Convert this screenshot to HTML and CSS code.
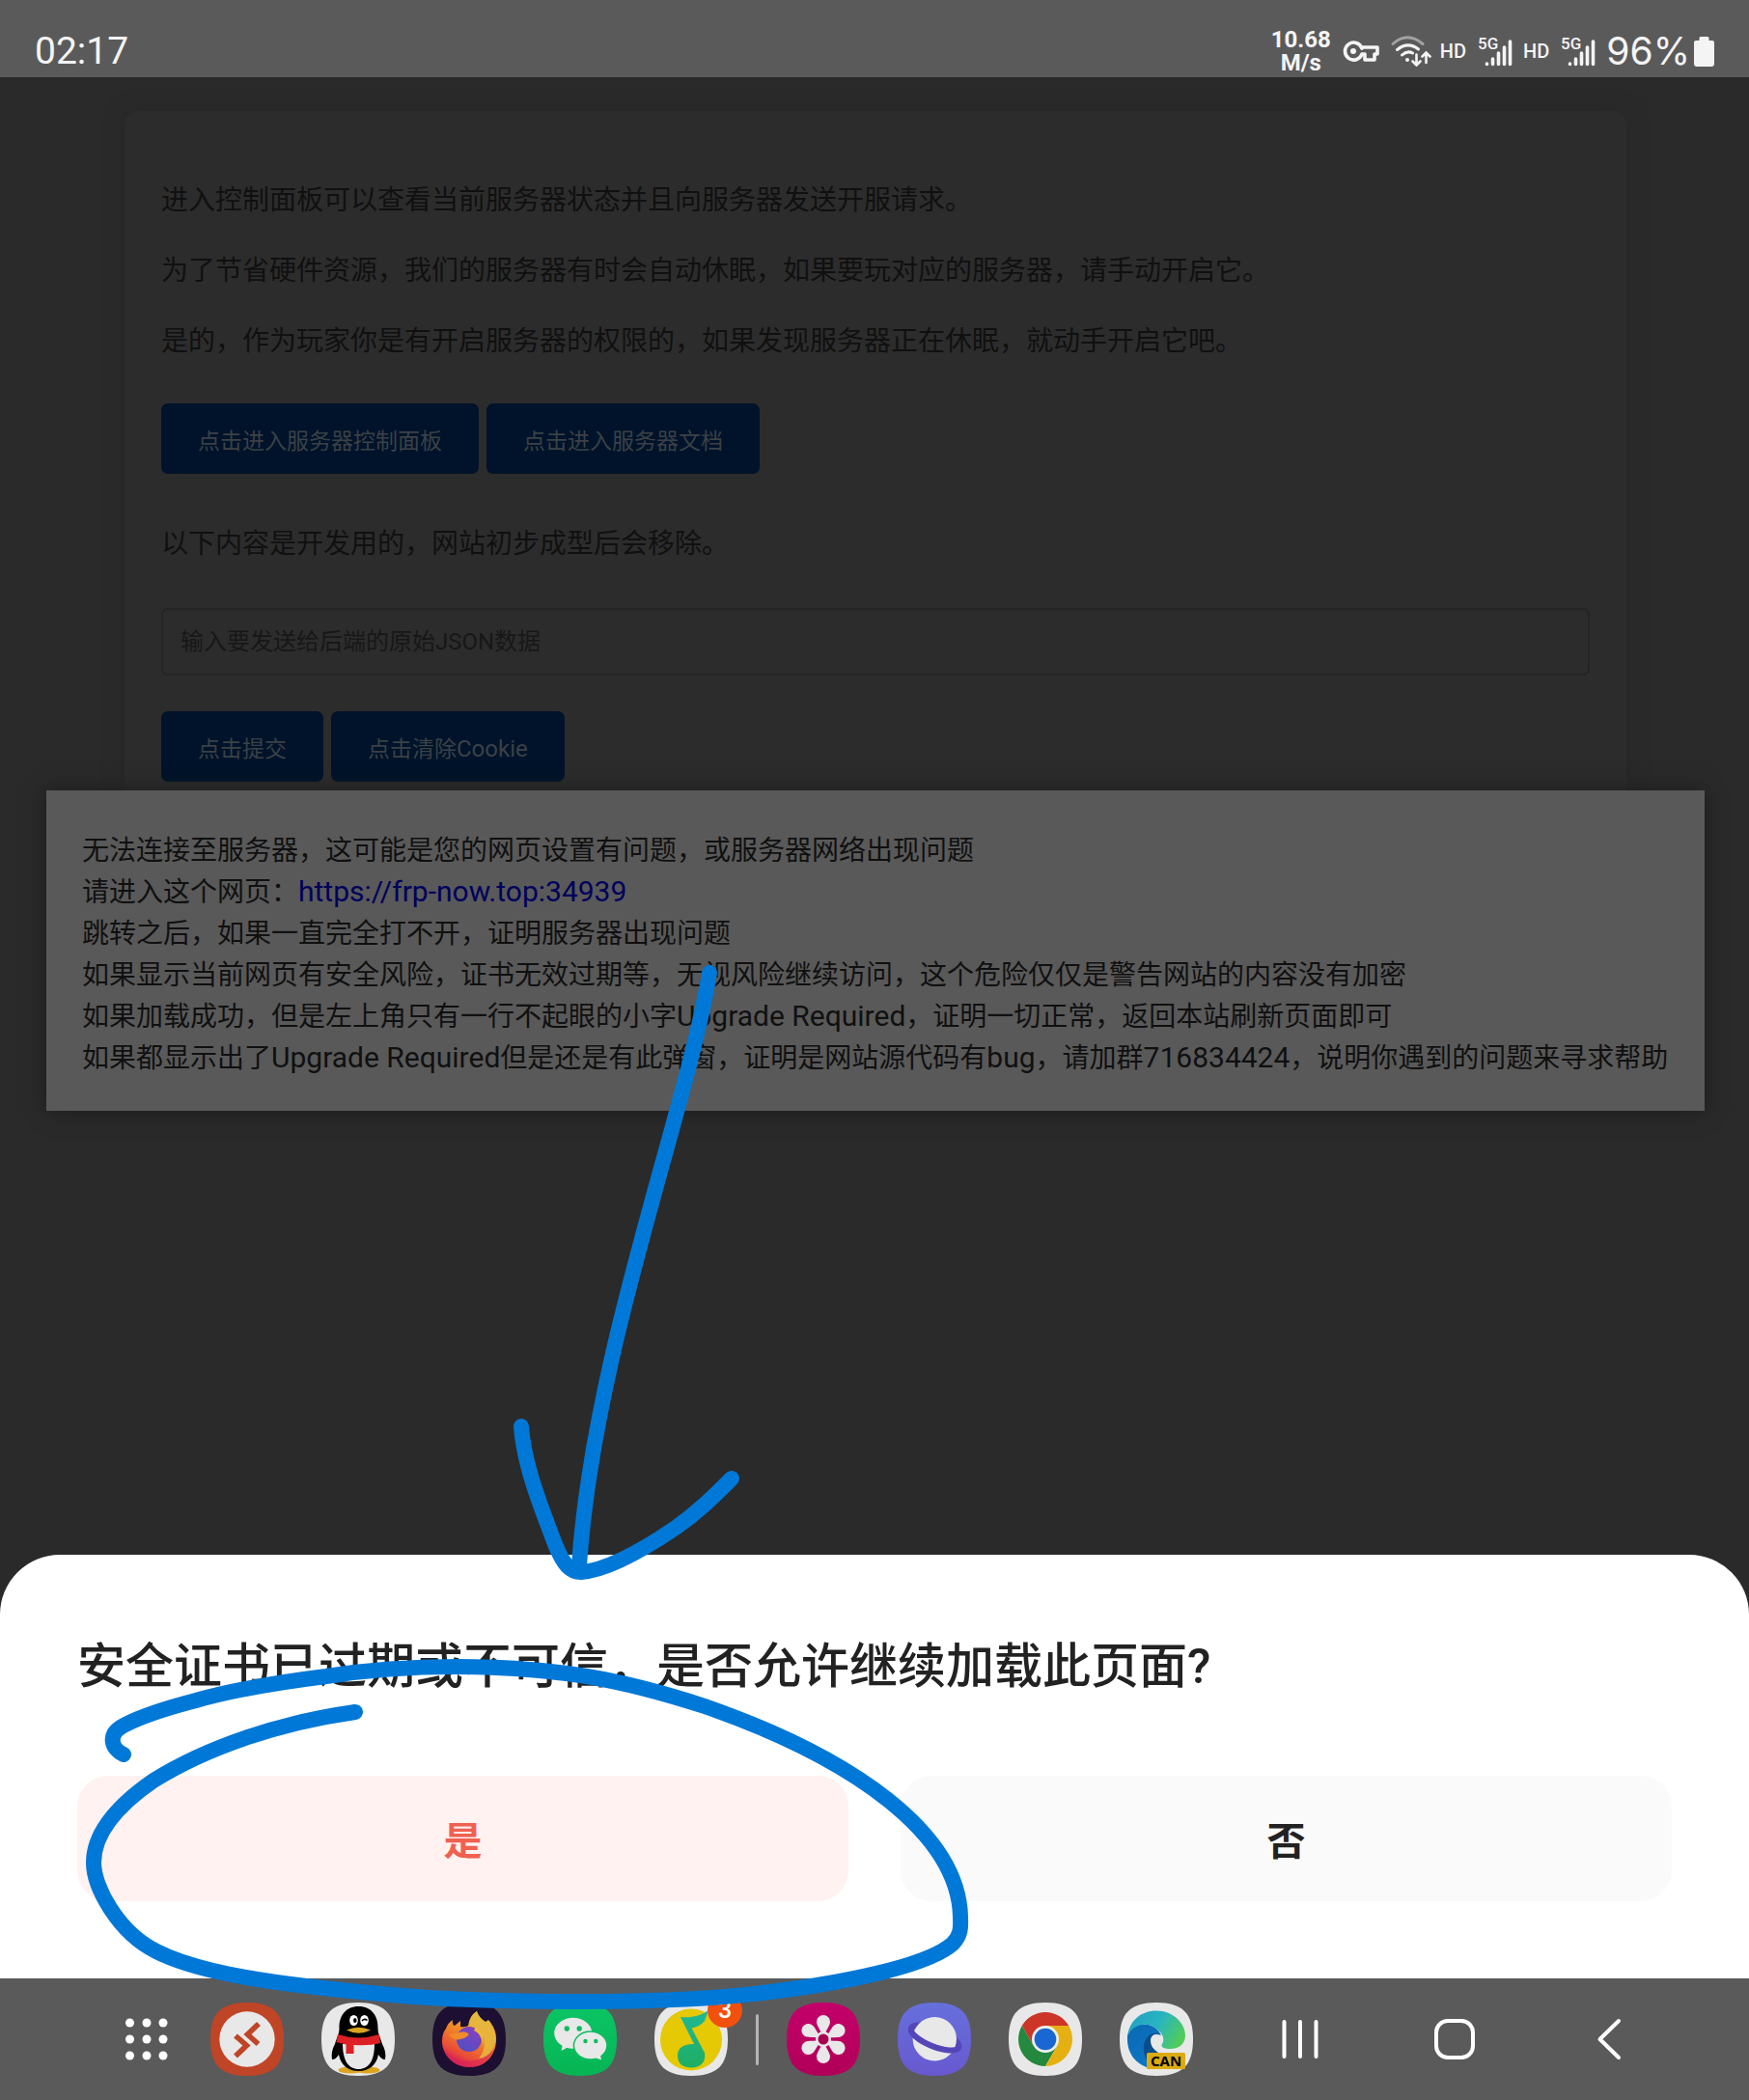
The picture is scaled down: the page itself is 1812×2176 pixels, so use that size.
FILE: index.html
```html
<!DOCTYPE html>
<html lang="zh-CN">
<head>
<meta charset="utf-8">
<meta name="viewport" content="width=device-width, initial-scale=1">
<title>服务器控制面板</title>
<link rel="stylesheet" href="styles.css">
</head>
<body>
<header class="status">
  <time class="clock">02:17</time>
  <div class="indicators">
    <div class="speed">10.68<br>M/s</div>
    <svg class="key" viewBox="0 0 38 22" width="38" height="22" aria-hidden="true"><path d="M20 8.2A9 9 0 1 0 20 14H23V20H33V14H36V7H20Z" fill="none" stroke="#f4f4f4" stroke-width="3.6" stroke-linejoin="round"/><circle cx="11" cy="11" r="3" fill="#f4f4f4"/></svg>
    <svg class="wifi" viewBox="0 0 42 32" width="42" height="32" fill="none" stroke-linecap="round" aria-hidden="true"><path d="M2 8.500Q17 -5 33 8.500" stroke="#a2a2a2" stroke-width="3"/><path d="M6.500 14.500Q17.500 5.500 28.500 14M11.500 20Q17 15 22.500 18" stroke="#f4f4f4" stroke-width="3"/><circle cx="17" cy="25" r="2" fill="#f4f4f4"/><path d="M26.500 19.500V30M22.500 26.500L26.500 30.500L30.500 26.500M36.500 28V18M32.500 21.500L36.500 17.500L40.500 21.500" stroke="#f4f4f4" stroke-width="2.600"/></svg>
    <span class="hd">HD</span>
    <svg class="signal" viewBox="0 0 38 32" width="38" height="32" aria-hidden="true"><text x="1" y="14" class="gen">5G</text><path d="M10.500 29.500V29M16.500 29.500V24M22.500 29.500V18M28.500 29.500V12M34.500 29.500V6" stroke="#f4f4f4" stroke-width="3.600" stroke-linecap="round"/></svg>
    <span class="hd">HD</span>
    <svg class="signal" viewBox="0 0 38 32" width="38" height="32" aria-hidden="true"><text x="1" y="14" class="gen">5G</text><path d="M10.500 29.500V29M16.500 29.500V24M22.500 29.500V18M28.500 29.500V12M34.500 29.500V6" stroke="#f4f4f4" stroke-width="3.600" stroke-linecap="round"/></svg>
    <span class="percent">96%</span>
    <svg class="battery" viewBox="0 0 21 31" width="21" height="31" aria-hidden="true"><path d="M7 0H14Q15.500 0 15.500 1.500V4H19Q21 4 21 6V28Q21 31 18 31H3Q0 31 0 28V6Q0 4 2 4H5.500V1.500Q5.500 0 7 0Z" fill="#f4f4f4"/></svg>
  </div>
</header>

<main class="page">
  <section class="card">
    <p>进入控制面板可以查看当前服务器状态并且向服务器发送开服请求。</p>
    <p>为了节省硬件资源，我们的服务器有时会自动休眠，如果要玩对应的服务器，请手动开启它。</p>
    <p>是的，作为玩家你是有开启服务器的权限的，如果发现服务器正在休眠，就动手开启它吧。</p>
    <div class="actions">
      <button type="button">点击进入服务器控制面板</button>
      <button type="button">点击进入服务器文档</button>
    </div>
    <p>以下内容是开发用的，网站初步成型后会移除。</p>
    <input class="json" type="text" placeholder="输入要发送给后端的原始JSON数据" aria-label="输入要发送给后端的原始JSON数据">
    <div class="actions">
      <button type="button">点击提交</button>
      <button type="button">点击清除<span class="latin-small">Cookie</span></button>
    </div>
  </section>
  <section class="notice">
    无法连接至服务器，这可能是您的网页设置有问题，或服务器网络出现问题<br>
    请进入这个网页：<a class="latin" href="https://frp-now.top:34939">https://frp-now.top:34939</a><br>
    跳转之后，如果一直完全打不开，证明服务器出现问题<br>
    如果显示当前网页有安全风险，证书无效过期等，无视风险继续访问，这个危险仅仅是警告网站的内容没有加密<br>
    如果加载成功，但是左上角只有一行不起眼的小字<span class="latin">Upgrade Required</span>，证明一切正常，返回本站刷新页面即可<br>
    如果都显示出了<span class="latin">Upgrade Required</span>但是还是有此弹窗，证明是网站源代码有<span class="latin">bug</span>，请加群<span class="latin">716834424</span>，说明你遇到的问题来寻求帮助
  </section>
</main>

<section class="sheet" role="dialog" aria-labelledby="sheet-title">
  <h1 id="sheet-title">安全证书已过期或不可信，是否允许继续加载此页面?</h1>
  <div class="choices">
    <button type="button" class="yes">是</button>
    <button type="button" class="no">否</button>
  </div>
</section>

<nav class="taskbar">
  <svg width="0" height="0" class="defs" aria-hidden="true"><defs>
    <path id="tile" d="M38 0C65 0 76 11 76 38S65 76 38 76 0 65 0 38 11 0 38 0Z"/>
    <linearGradient id="fox" x1="0.8" y1="0" x2="0.3" y2="1"><stop offset="0" stop-color="#e8c545"/><stop offset="0.45" stop-color="#f08a25"/><stop offset="0.8" stop-color="#ea4a38"/><stop offset="1" stop-color="#c81065"/></linearGradient>
    <linearGradient id="globe" x1="0.8" y1="0" x2="0.2" y2="1"><stop offset="0" stop-color="#8a3fc0"/><stop offset="1" stop-color="#4d50c4"/></linearGradient>
    <linearGradient id="wechat" x1="0" y1="0" x2="0" y2="1"><stop offset="0" stop-color="#0cc566"/><stop offset="1" stop-color="#06b554"/></linearGradient>
    <linearGradient id="note" x1="0" y1="0" x2="0" y2="1"><stop offset="0" stop-color="#1fb898"/><stop offset="1" stop-color="#1fae62"/></linearGradient>
    <linearGradient id="pink" x1="0" y1="0" x2="0" y2="1"><stop offset="0" stop-color="#c4006a"/><stop offset="1" stop-color="#b00058"/></linearGradient>
    <linearGradient id="violet" x1="0" y1="0" x2="0" y2="1"><stop offset="0" stop-color="#6670dc"/><stop offset="1" stop-color="#6858cf"/></linearGradient>
    <linearGradient id="wave" x1="0" y1="0.2" x2="1" y2="0.6"><stop offset="0" stop-color="#239fc4"/><stop offset="0.5" stop-color="#28b5c0"/><stop offset="1" stop-color="#52cc58"/></linearGradient>
    <linearGradient id="deep" x1="0" y1="0" x2="0.6" y2="1"><stop offset="0" stop-color="#0b67b0"/><stop offset="1" stop-color="#0c78c8"/></linearGradient>
  </defs></svg>
  <div class="dock">
    <button type="button" class="grid" aria-label="所有应用"><svg viewBox="0 0 76 76" fill="#fff"><circle cx="20.500" cy="21" r="4.500"/><circle cx="38" cy="21" r="4.500"/><circle cx="55" cy="21" r="4.500"/><circle cx="20.500" cy="38" r="4.500"/><circle cx="38" cy="38" r="4.500"/><circle cx="55" cy="38" r="4.500"/><circle cx="20.500" cy="55" r="4.500"/><circle cx="38" cy="55" r="4.500"/><circle cx="55" cy="55" r="4.500"/></svg></button>
    <button type="button" aria-label="远程桌面"><svg viewBox="0 0 76 76"><use href="#tile" fill="#c04426"/><circle cx="38" cy="38" r="28.700" fill="#e8e8e8"/><path d="M26 34.500L37.500 44.500L26 55.500M50 22L38.500 33L49.500 43" fill="none" stroke="#c04426" stroke-width="5.600" stroke-linejoin="miter"/></svg></button>
    <button type="button" aria-label="QQ"><svg viewBox="0 0 76 76"><use href="#tile" fill="#e8e8e8"/><ellipse cx="30" cy="70" rx="12.500" ry="3.600" fill="#dba51e"/><ellipse cx="48" cy="70" rx="12.500" ry="3.600" fill="#dba51e"/><path d="M38.500 4C25 4 18 14 18.500 27C18.500 32 16 36 14 43C11 48 10 54 11 59C14 59 16 57 18 54C20 65 28 71 38.500 71S57 65 59 54C61 57 63 59 66 59C67 54 66 48 63 43C61 36 58.500 32 58.500 27C59 14 52 4 38.500 4Z"/><path d="M22 43C22 60 28 69 38.500 69S55 60 55 43Z" fill="#e8e8e8"/><path d="M17 33Q38 40 60 33L61 42Q50 45 33.500 44V53H25.500V43.500L15.500 41Z" fill="#dc2026"/><ellipse cx="33.500" cy="18.500" rx="4.300" ry="5.500" fill="#fff"/><ellipse cx="44.500" cy="18.500" rx="4.300" ry="5.500" fill="#fff"/><ellipse cx="34.800" cy="18.500" rx="1.800" ry="2.500"/><path d="M42 19Q44.500 16 47.500 18.500" fill="none" stroke="#000" stroke-width="1.500"/><path d="M26 28.500Q38.500 23 51 28.500Q38.500 35 26 28.500Z" fill="#dba51e"/></svg></button>
    <button type="button" aria-label="Firefox"><svg viewBox="0 0 76 76"><use href="#tile" fill="#1c0f31"/><path d="M14 27Q16 21 21 18Q20 23 23 24L29 19V25Q33 26 37 24Q38 14 46 9Q48 16 55 20L58 18Q67 28 66 40C65 57 53 67 38 67S10 55 10 40Q10 32 14 27Z" fill="url(#fox)"/><path d="M46 9Q48 16 55 20Q67 29 65 42Q60 57 48 58Q56 48 53 36Q49 27 38 26Q38 14 46 9Z" fill="#e5b940" opacity="0.85"/><circle cx="38" cy="38" r="13" fill="url(#globe)"/><path d="M17 33L28 31Q35 29 38 33Q35 37 29 38Q22 40 17 33Z" fill="#f18a28"/><path d="M45 25Q55 33 52 44Q51 32 43 29Z" fill="#f1b834"/><path d="M11 46Q20 63 42 60Q57 58 64 48Q57 67 38 67Q17 66 11 46Z" fill="#da2558" opacity="0.6"/></svg></button>
    <button type="button" aria-label="微信"><svg viewBox="0 0 76 76"><use href="#tile" fill="url(#wechat)"/><path d="M20 43L18.500 50L26 46Z" fill="#e8e8e8"/><ellipse cx="30.700" cy="31.700" rx="19.500" ry="16" fill="#e8e8e8"/><ellipse cx="48.700" cy="44.500" rx="18" ry="15.300" fill="#09bd5d"/><path d="M53 57L60 59.500L58.500 52Z" fill="#e8e8e8"/><ellipse cx="48.700" cy="44.500" rx="16.500" ry="13.800" fill="#e8e8e8"/><g fill="#09bd5d"><circle cx="24.300" cy="27" r="2.700"/><circle cx="37.200" cy="27" r="2.700"/><circle cx="43.500" cy="40" r="2.200"/><circle cx="54.300" cy="40" r="2.200"/></g></svg></button>
    <button type="button" aria-label="QQ音乐"><svg viewBox="0 0 76 76"><use href="#tile" fill="#e8e8e8"/><circle cx="38" cy="38.500" r="32" fill="#e4c904"/><path d="M27 15C38 16 48 14 56 8L52 19Q47 25 38.500 26.500L52 52Q54 67 38 67.500Q24 67 24 55Q24 43 41 43Z" fill="url(#note)"/></svg><span class="badge">3</span></button>
    <span class="divider"></span>
    <button type="button" aria-label="相册"><svg viewBox="0 0 76 76"><use href="#tile" fill="url(#pink)"/><g fill="#e8e8e8"><path id="petal" d="M38 36C35 28 31 24 31 20A7 7 0 0 1 45 20C45 24 41 28 38 36Z"/><use href="#petal" transform="rotate(60 38 38)"/><use href="#petal" transform="rotate(120 38 38)"/><use href="#petal" transform="rotate(180 38 38)"/><use href="#petal" transform="rotate(240 38 38)"/><use href="#petal" transform="rotate(300 38 38)"/><circle cx="38" cy="38" r="8"/></g><circle cx="38" cy="38" r="5.500" fill="#a8004f"/></svg></button>
    <button type="button" aria-label="浏览器"><svg viewBox="0 0 76 76"><use href="#tile" fill="url(#violet)"/><g fill="none" stroke="#5546b8" stroke-width="6"><ellipse cx="0" cy="0" rx="26.500" ry="9" transform="translate(38.500 36.500) rotate(22)"/><circle cx="38.300" cy="37.700" r="22.700" fill="#e8e8e8" stroke="none"/><path d="M-26.500 0A26.500 9 0 0 0 26.500 0" transform="translate(38.500 36.500) rotate(22)"/></g></svg></button>
    <button type="button" aria-label="Chrome"><svg viewBox="0 0 76 76"><use href="#tile" fill="#e8e8e8"/><path d="M62.200 24A28 28 0 0 0 13.800 24L25.900 45L38 24Z" fill="#cd3529"/><path d="M13.800 24A28 28 0 0 0 38 66L50.100 45L38 38L25.900 45Z" fill="#24883f"/><path d="M38 66A28 28 0 0 0 62.200 24H38V38L50.100 45Z" fill="#e5b011"/><circle cx="38" cy="38" r="14" fill="#f0f0f0"/><circle cx="38" cy="38" r="11.300" fill="#1967d2"/></svg></button>
    <button type="button" aria-label="Edge Canary"><svg viewBox="0 0 76 76"><use href="#tile" fill="#e8e8e8"/><path d="M8 38C8 22 20 22 30 23Q40 26 43 34C32 30 26 38 27 47L31 68C17 64 8 53 8 38Z" fill="url(#deep)"/><path d="M43 33C31 28 24 38 25 50Q26 60 33 64L40 52Q31 46 32 38Q34 31 43 33Z" fill="#0b4c8c"/><path d="M8.500 34C10 19 22 8.500 38 8.500C56 8.500 68 22 68 34C68 43 61 48 53 48C46 48 42 46 44 43C47 39 45 32 39 28C30 19 14 22 8.500 34Z" fill="url(#wave)"/><rect x="28" y="52" width="40" height="17" rx="1.500" fill="#dcab14"/><text x="48" y="65.500" text-anchor="middle" class="can">CAN</text></svg></button>
  </div>
  <div class="keys">
    <button type="button" aria-label="最近任务"><svg viewBox="0 0 76 76"><path d="M21.500 20V56M38 20V56M54.500 20V56" stroke="#fff" stroke-width="4" stroke-linecap="round"/></svg></button>
    <button type="button" aria-label="主屏幕"><svg viewBox="0 0 76 76"><rect x="19" y="19" width="38" height="38" rx="12" fill="none" stroke="#fff" stroke-width="4"/></svg></button>
    <button type="button" aria-label="返回"><svg viewBox="0 0 76 76"><path d="M48 19L28.500 38L48 57" fill="none" stroke="#fff" stroke-width="4" stroke-linecap="round" stroke-linejoin="round"/></svg></button>
  </div>
</nav>

<svg class="ink" viewBox="0 0 1812 2176" preserveAspectRatio="none" aria-hidden="true">
  <path d="M735 1008C712 1150 615 1400 600 1622"/>
  <path d="M540 1478C543 1520 562 1565 575 1600C584 1622 591 1629 602 1629C632 1627 675 1600 700 1583C723 1567 740 1550 758 1532"/>
  <path d="M368 1774C290 1785 215 1810 159 1845C120 1872 97 1900 97 1930C97 1955 122 2002 162 2022C205 2044 280 2056 406 2067C470 2073 540 2074 608 2074C680 2074 745 2071 798 2064C870 2055 960 2038 987 2014C997 2004 995 1994 995 1986C993 1900 885 1822 730 1768C690 1755 650 1744 608 1737C563 1730 520 1727 473 1727C428 1727 382 1730 338 1737C290 1743 245 1750 203 1762C172 1770 143 1780 128 1788C111 1797 115 1812 128 1818"/>
</svg>
</body>
</html>
```

FILE: styles.css
```css
* {
  box-sizing: border-box;
}

body {
  position: relative;
  display: flex;
  flex-direction: column;
  min-height: 100vh;
  margin: 0;
  background: #2a2a2a;
  color: #101010;
  font-family: Roboto, "Noto Sans CJK SC", sans-serif;
  font-size: 28px;
}

button,
input {
  border: 0;
  font-family: inherit;
}

/* Status bar */
.status {
  display: flex;
  justify-content: space-between;
  align-items: center;
  height: 80px;
  padding: 26px 36px 0;
  background: #5a5a5a;
  color: #f4f4f4;
}

.clock {
  font-size: 39px;
  line-height: 48px;
}

.indicators {
  display: flex;
  align-items: center;
}

.speed {
  margin-right: 12px;
  font-size: 24px;
  font-weight: 700;
  line-height: 24px;
  text-align: center;
}

.key {
  margin-right: 12px;
}

.wifi {
  margin-right: 9px;
}

.hd {
  font-size: 20px;
  font-weight: 500;
  line-height: 24px;
}

.signal {
  margin: 0 10px 0 11px;
  overflow: visible;
}

.gen {
  fill: #f4f4f4;
  font-size: 17px;
  font-weight: 500;
}

.percent {
  margin-right: 4px;
  font-family: Inter, sans-serif;
  font-size: 39px;
  line-height: 48px;
}

/* Web page */
.page {
  flex: 1;
  padding: 35px 46px 0 48px;
}

.card {
  margin: 0 81px;
  padding: 70px 38px 9px;
  border-radius: 14px 14px 0 0;
  background: #2c2c2c;
  box-shadow: 0 0 20px #272727;
}

.card p {
  margin: 0 0 28px;
  line-height: 45px;
}

.actions {
  display: flex;
  gap: 8px;
}

.card p + .actions {
  margin: 42px 0 50px;
}

.actions button {
  height: 73px;
  padding: 0 38px;
  border-radius: 7px;
  background: #00132a;
  color: #3b4146;
  font-size: 23px;
}

.latin-small {
  font-size: 24px;
}

.json {
  width: 100%;
  height: 70px;
  margin: 16px 0 37px;
  padding: 0 18px;
  border: 2px solid #242424;
  border-radius: 7px;
  background: transparent;
  font-size: 24px;
}

.json::placeholder {
  color: #171717;
}

.notice {
  position: relative;
  padding: 41px 37px 33px;
  background: #595959;
  box-shadow: 0 0 20px #1c1c1c;
  line-height: 43px;
}

.latin {
  font-size: 30px;
  line-height: 1;
}

.notice a {
  color: #00005c;
  text-decoration: none;
}

/* Confirmation sheet */
.sheet {
  padding: 86px 80px 80px;
  border-radius: 62px 62px 0 0;
  background: #fff;
  color: #222;
}

.sheet h1 {
  margin: 0 0 83px;
  font-size: 50px;
  font-weight: 500;
  line-height: 60px;
}

.choices {
  display: grid;
  grid-template-columns: 1fr 1fr;
  gap: 54px;
}

.choices button {
  height: 130px;
  border-radius: 32px;
  font-size: 40px;
  font-weight: 700;
}

.yes {
  background: #fff2f0;
  color: #ef6150;
}

.no {
  background: #fafafa;
  color: #222;
}

/* Taskbar */
.taskbar {
  display: flex;
  justify-content: space-between;
  align-items: center;
  height: 126px;
  padding: 0 65px 0 114px;
  background: #5a5a5a;
}

.defs {
  position: absolute;
}

.dock {
  display: flex;
  align-items: center;
  gap: 39px;
}

.taskbar button {
  position: relative;
  padding: 0;
  background: none;
}

.taskbar button svg {
  display: block;
  width: 76px;
  height: 76px;
}

.dock .grid {
  margin-right: -11px;
}

.divider {
  width: 3px;
  height: 53px;
  margin: 0 -10px;
  border-radius: 2px;
  background: #b4b4b4;
}

.badge {
  position: absolute;
  top: -10px;
  right: -15px;
  width: 36px;
  height: 36px;
  border-radius: 18px;
  background: #f2500f;
  color: #fff;
  font-size: 25px;
  font-weight: 500;
  line-height: 36px;
  text-align: center;
}

.can {
  font-family: "Noto Sans", sans-serif;
  font-size: 15px;
  font-weight: 700;
}

.keys {
  display: flex;
}

.keys button {
  display: flex;
  justify-content: center;
  width: 160px;
}

/* Hand-drawn marks over the whole screen */
.ink {
  position: absolute;
  top: 0;
  left: 0;
  width: 100%;
  height: 100%;
  fill: none;
  stroke: #0078d7;
  stroke-width: 16px;
  stroke-linecap: round;
  stroke-linejoin: round;
  pointer-events: none;
}
```
